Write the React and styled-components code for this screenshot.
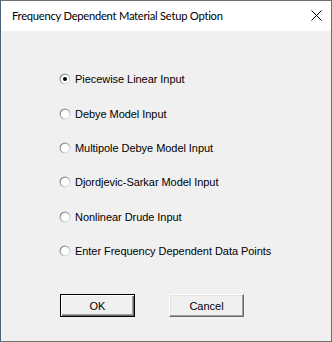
import React, { useState } from 'react'
import styled, { createGlobalStyle } from 'styled-components'

const options = [
  'Piecewise Linear Input',
  'Debye Model Input',
  'Multipole Debye Model Input',
  'Djordjevic-Sarkar Model Input',
  'Nonlinear Drude Input',
  'Enter Frequency Dependent Data Points',
]

const Radio = ({ checked }) => (
  <svg width="12" height="12" viewBox="0 0 12 12">
    <defs>
      <linearGradient id="ring" x1="0" y1="0" x2="1" y2="1">
        <stop offset="0" stopColor="#6a6a6a" />
        <stop offset="0.5" stopColor="#b4b4b4" />
        <stop offset="1" stopColor="#ffffff" />
      </linearGradient>
    </defs>
    <circle cx="6" cy="6" r="5.5" fill="url(#ring)" />
    <circle cx="6" cy="6" r="4.3" fill="#ffffff" />
    {checked && <circle cx="6" cy="6" r="2" fill="#000" />}
  </svg>
)

const App = () => {
  const [selected, setSelected] = useState(0)

  return (
    <>
      <GlobalStyle />
      <Window>
        <TitleBar>
          <Title>Frequency Dependent Material Setup Option</Title>
          <Close>
            <svg width="11" height="11" viewBox="0 0 11 11">
              <path d="M0.5 0.5 L10.5 10.5 M10.5 0.5 L0.5 10.5" stroke="#000" strokeWidth="1" />
            </svg>
          </Close>
        </TitleBar>
        <Body>
          <OptionList>
            {options.map((label, i) => (
              <Option key={label} onClick={() => setSelected(i)}>
                <Radio checked={selected === i} />
                <span>{label}</span>
              </Option>
            ))}
          </OptionList>
          <ButtonRow>
            <Button $default>OK</Button>
            <Button>Cancel</Button>
          </ButtonRow>
        </Body>
      </Window>
    </>
  )
}

const GlobalStyle = createGlobalStyle`
body {
  margin: 0;
  background: #f0f0f0;
}
`

const Window = styled.div`
width: 332px;
height: 342px;
box-sizing: border-box;
border: 1px solid #6f6f6f;
border-left-color: #4a6580;
display: flex;
flex-direction: column;
background: #f0f0f0;
`

const TitleBar = styled.div`
height: 30px;
flex: none;
background: #ffffff;
display: flex;
align-items: center;
justify-content: space-between;
padding: 0 9px 1px 11px;
box-sizing: border-box;
`

const Title = styled.div`
font-family: Lato, "Liberation Sans", sans-serif;
font-size: 11.2px;
letter-spacing: -0.25px;
color: #000;
`

const Close = styled.div`
width: 12px;
display: flex;
justify-content: center;
align-items: center;
`

const Body = styled.div`
flex: 1;
display: flex;
flex-direction: column;
padding: 31px 0 0 58px;
`

const OptionList = styled.div`
display: grid;
grid-auto-rows: 34.35px;
`

const Option = styled.label`
display: flex;
align-items: center;
gap: 4px;
font-family: "Liberation Sans", Arial, sans-serif;
font-size: 11px;
letter-spacing: -0.05px;
color: #000;
cursor: default;
`

const ButtonRow = styled.div`
display: flex;
gap: 34px;
margin-top: 26px;
padding-left: 1px;
`

const Button = styled.button`
width: 75px;
height: 23px;
box-sizing: border-box;
font-family: "Liberation Sans", Arial, sans-serif;
font-size: 11px;
color: #000;
background: #f0f0f0;
padding: 0;
border: 1px solid;
border-color: ${p => p.$default ? '#000' : '#fff #696969 #696969 #fff'};
box-shadow: ${p => p.$default
  ? 'inset 1px 1px 0 #fff, inset -1px -1px 0 #696969, inset -2px -2px 0 #a0a0a0'
  : 'inset -1px -1px 0 #a0a0a0, inset 1px 1px 0 #e3e3e3'};
`

export default App
